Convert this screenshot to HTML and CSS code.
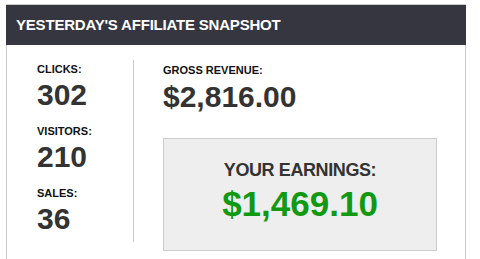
FILE: index.html
```html
<!DOCTYPE html>
<html lang="en">

<head>
    <meta charset="UTF-8">
    <meta name="viewport" content="width=device-width, initial-scale=1.0">
    <title>Affiliate Snapshot</title>
    <link rel="stylesheet" href="styles.css">
</head>

<body>
    <div class="panel">
        <h2 class="panel-title">YESTERDAY'S AFFILIATE SNAPSHOT</h2>

        <div class="panel-body">
            <div class="stats">
                <div class="stat">
                    <div class="label">CLICKS:</div>
                    <div class="value">302</div>
                </div>
                <div class="stat">
                    <div class="label">VISITORS:</div>
                    <div class="value">210</div>
                </div>
                <div class="stat">
                    <div class="label">SALES:</div>
                    <div class="value">36</div>
                </div>
            </div>

            <div class="revenue">
                <div class="label">GROSS REVENUE:</div>
                <div class="value">$2,816.00</div>

                <div class="earnings">
                    <div class="earnings-label">YOUR EARNINGS:</div>
                    <div class="earnings-value">$1,469.10</div>
                </div>
            </div>
        </div>
    </div>
</body>

</html>
```

FILE: styles.css
```css
body {
    font-family: 'Liberation Sans', Arial, Helvetica, sans-serif;
    margin: 0;
    background: #fff;
    color: #333;
}

.panel {
    width: 460px;
    box-sizing: border-box;
    margin: 4px 0 0 6px;
    padding-bottom: 15px;
    border: 1px solid #ccc;
    border-bottom: none;
}

.panel-title {
    margin: 0 -1px;
    height: 40px;
    padding-left: 10px;
    background: #353640;
    color: #fff;
    font-size: 15px;
    line-height: 40px;
    letter-spacing: -0.2px;
}

.panel-body {
    display: flex;
    padding-left: 30px;
    margin-top: 15px;
}

.stats {
    width: 97px;
    height: 182px;
    box-sizing: border-box;
    padding-top: 3px;
    border-right: 1px solid #ccc;
}

.stat {
    margin-bottom: 13px;
}

.label {
    font-size: 11px;
    line-height: 13px;
    font-weight: bold;
    color: #111;
}

.value {
    margin-top: 2px;
    font-size: 30px;
    line-height: 34px;
    font-weight: bold;
}

.revenue {
    margin-left: 29px;
    padding-top: 4px;
}

.revenue .value {
    margin-top: 3px;
}

.earnings {
    width: 274px;
    box-sizing: border-box;
    margin-top: 24px;
    padding: 20px 0 26px;
    background: #eee;
    border: 1px solid #ccc;
    text-align: center;
}

.earnings-label {
    font-size: 18px;
    line-height: 22px;
    font-weight: bold;
    letter-spacing: -0.4px;
}

.earnings-value {
    margin-top: 3px;
    font-size: 35px;
    line-height: 40px;
    font-weight: bold;
    color: #119911;
}
```
